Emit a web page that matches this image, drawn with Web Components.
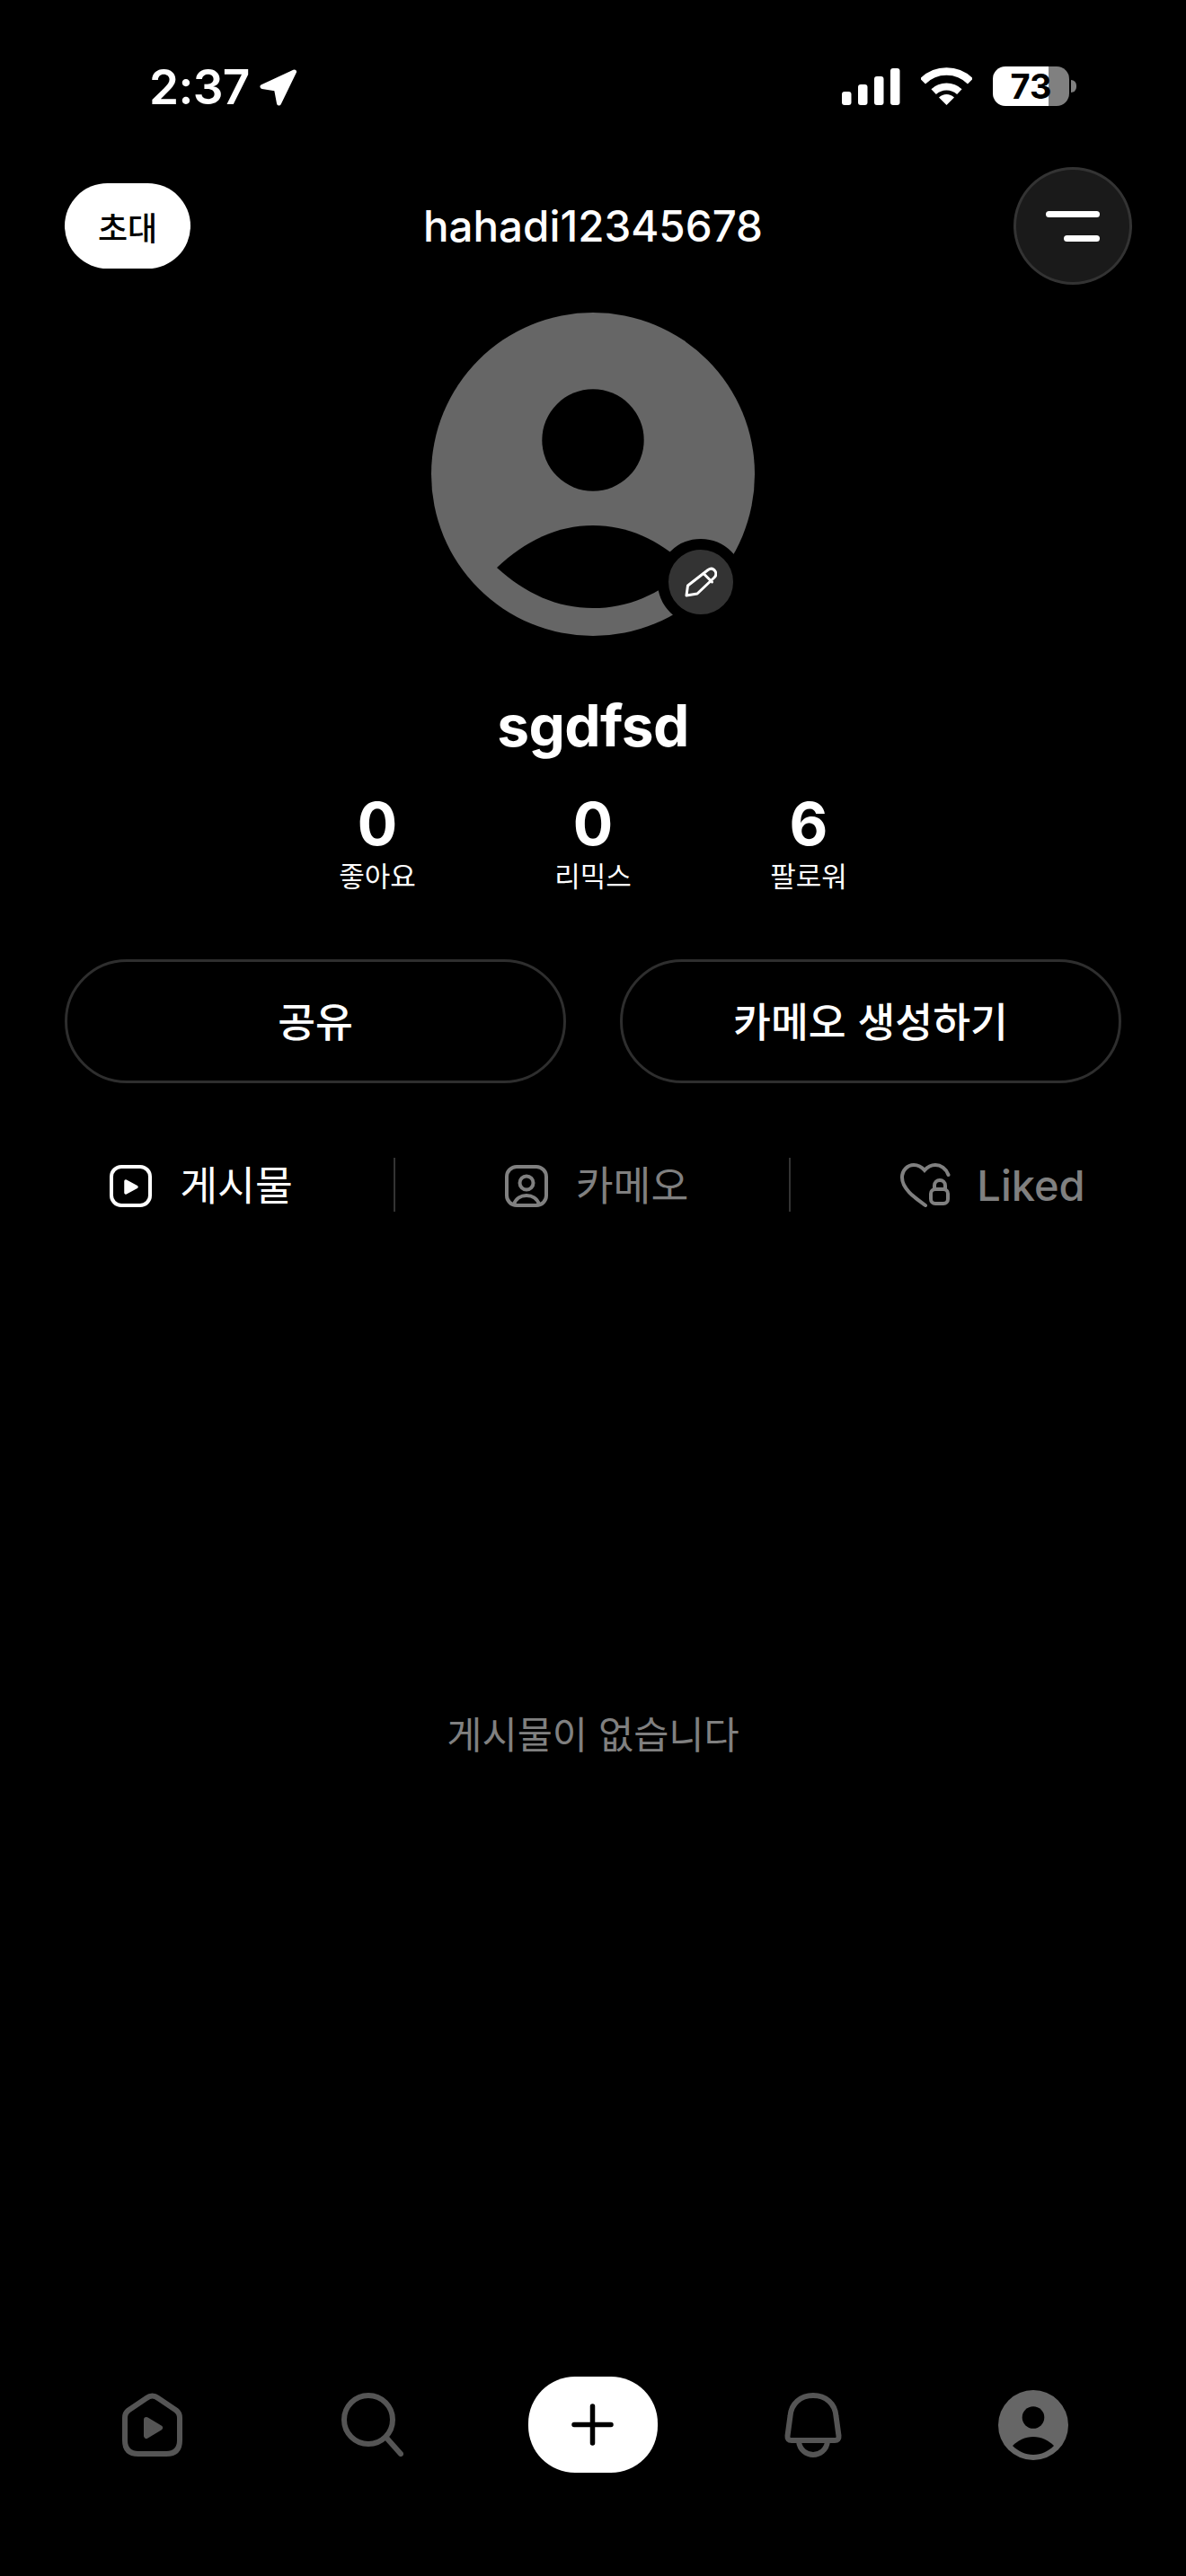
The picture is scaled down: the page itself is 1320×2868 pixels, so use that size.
<!DOCTYPE html>
<html lang="ko">
<head>
<meta charset="utf-8">
<title>sgdfsd</title>
<style>
  html, body { margin: 0; background: #000; }
  body {
    width: 1320px; height: 2868px; overflow: hidden;
    display: flex; flex-direction: column;
    color: #fff;
    font-family: Inter, "Noto Sans CJK KR", sans-serif;
  }
</style>
</head>
<body>
<status-bar time="2:37" level="73"></status-bar>
<profile-header handle="hahadi12345678" invite="초대"></profile-header>
<profile-avatar></profile-avatar>
<profile-name>sgdfsd</profile-name>
<stat-row>
  <stat-item value="0" label="좋아요"></stat-item>
  <stat-item value="0" label="리믹스"></stat-item>
  <stat-item value="6" label="팔로워"></stat-item>
</stat-row>
<action-row>
  <action-button>공유</action-button>
  <action-button>카메오 생성하기</action-button>
</action-row>
<profile-tabs>
  <tab-item active label="게시물" icon="posts"></tab-item>
  <tab-item label="카메오" icon="cameo"></tab-item>
  <tab-item label="Liked" icon="liked"></tab-item>
</profile-tabs>
<empty-note>게시물이 없습니다</empty-note>
<bottom-nav></bottom-nav>

<script>
  // Small helper: one shadow root per element, styles included.
  function shadow(el, html) {
    el.attachShadow({ mode: 'open' }).innerHTML = html;
  }

  customElements.define('status-bar', class extends HTMLElement {
    connectedCallback() {
      const t = this.getAttribute('time'), lv = this.getAttribute('level');
      shadow(this, `<style>
        :host { display: flex; align-items: flex-start; justify-content: space-between; height: 186px; padding: 0 122px 0 166px; box-sizing: border-box; flex: none; }
        .left { display: flex; align-items: flex-start; margin-top: 70px; }
        .time { font: 600 53px/54px Inter, sans-serif; letter-spacing: -0.6px; }
        .arrow { width: 42px; height: 41px; margin: 7px 0 0 11px; }
        .right { display: flex; align-items: flex-start; margin-top: 74px; }
        .bars { width: 65px; height: 41px; margin-top: 2px; }
        .wifi { width: 57px; height: 42px; margin: 1px 0 0 23px; }
        .batt { width: 85px; height: 44px; margin-left: 23px; border-radius: 14px; display: flex; align-items: center; justify-content: center;
                background: linear-gradient(90deg, #fff 73%, #808080 73%); color: #000; font: 700 38px/44px Inter, sans-serif; }
        .nub { width: 6px; height: 14px; margin: 15px 0 0 2px; background: #808080; border-radius: 0 7px 7px 0; }
      </style>
      <div class="left">
        <span class="time">${t}</span>
        <svg class="arrow" viewBox="0 0 42 41"><path d="M38.5 3 3 19.5 18.5 22 21.5 38Z" fill="#fff" stroke="#fff" stroke-width="5" stroke-linejoin="round"/></svg>
      </div>
      <div class="right">
        <svg class="bars" viewBox="0 0 65 41" fill="#fff">
          <rect x="0" y="26" width="10.5" height="15" rx="3"/>
          <rect x="18" y="18" width="10.5" height="23" rx="3"/>
          <rect x="36" y="9" width="10.5" height="32" rx="3"/>
          <rect x="54" y="0" width="10.5" height="41" rx="3"/>
        </svg>
        <svg class="wifi" viewBox="0 0 57 42">
          <path d="M2 15.5A37.5 37.5 0 0 1 55 15.5" fill="none" stroke="#fff" stroke-width="8.5"/>
          <path d="M14.15 27.15A21 21 0 0 1 42.85 27.15" fill="none" stroke="#fff" stroke-width="8"/>
          <path d="M28.5 42 20 33.5A12 12 0 0 1 37 33.5Z" fill="#fff"/>
        </svg>
        <div class="batt">${lv}</div>
        <div class="nub"></div>
      </div>`);
    }
  });

  customElements.define('profile-header', class extends HTMLElement {
    connectedCallback() {
      shadow(this, `<style>
        :host { display: grid; grid-template-columns: 1fr auto 1fr; align-items: center; height: 131px; padding: 0 60px; flex: none; }
        .invite { width: 140px; height: 95px; margin-left: 12px; border-radius: 47.5px; background: #fff; color: #000; display: flex; align-items: center; justify-content: center;
                  font: 500 36px/1 "Noto Sans CJK KR", sans-serif; }
        .handle { font: 500 47.5px/60px Inter, "Noto Sans CJK KR", sans-serif; }
        .menu { justify-self: end; width: 132px; height: 131px; box-sizing: border-box; border-radius: 50%; background: #1a1a1a; border: 3px solid #333; display: flex; flex-direction: column; align-items: flex-end; justify-content: center; gap: 20px; padding-right: 33px; }
        .menu i { display: block; height: 7px; border-radius: 4px; background: #fff; }
        .menu i:first-child { width: 60px; }
        .menu i:last-child { width: 40px; }
      </style>
      <div class="invite">${this.getAttribute('invite')}</div>
      <div class="handle">${this.getAttribute('handle')}</div>
      <div class="menu"><i></i><i></i></div>`);
    }
  });

  customElements.define('profile-avatar', class extends HTMLElement {
    connectedCallback() {
      shadow(this, `<style>
        :host { display: block; width: 360px; height: 360px; margin: 31px auto 0; position: relative; flex: none; }
        svg.face { display: block; width: 360px; height: 360px; }
        .badge { position: absolute; left: 252px; top: 252px; width: 72px; height: 72px; border-radius: 50%; background: #333; border: 12px solid #000; display: flex; align-items: center; justify-content: center; }
        .badge svg { width: 36px; height: 35px; }
      </style>
      <svg class="face" viewBox="0 0 360 360">
        <circle cx="180" cy="180" r="180" fill="#666"/>
        <circle cx="180" cy="142" r="56.7" fill="#000"/>
        <path d="M73 284C105 254 140 237 180 237C220 237 255 254 287 284C255 313 220 329 180 329C140 329 105 313 73 284Z" fill="#000"/>
      </svg>
      <div class="badge">
        <svg viewBox="0 0 36 35" fill="none" stroke="#fff" stroke-width="3" stroke-linejoin="round" stroke-linecap="round">
          <path d="M2 32 3.5 21 26 3.5C29 1.5 32 2 34 5C35.5 7.5 35 10 33 12L14 30Z"/>
          <path d="M21 7.5 30.5 17"/>
        </svg>
      </div>`);
    }
  });

  customElements.define('profile-name', class extends HTMLElement {
    connectedCallback() {
      shadow(this, `<style>
        :host { display: block; margin-top: 62px; text-align: center; font: 700 64px/76px Inter, sans-serif; letter-spacing: -0.6px; flex: none; }
      </style><slot></slot>`);
    }
  });

  customElements.define('stat-row', class extends HTMLElement {
    connectedCallback() {
      shadow(this, `<style>
        :host { display: grid; grid-template-columns: repeat(3, 240px); justify-content: center; margin-top: 41px; flex: none; }
      </style><slot></slot>`);
    }
  });

  customElements.define('stat-item', class extends HTMLElement {
    connectedCallback() {
      shadow(this, `<style>
        :host { display: flex; flex-direction: column; align-items: center; }
        .v { font: 700 66px/60px Inter, sans-serif; }
        .l { font: 400 31px/40px "Noto Sans CJK KR", sans-serif; margin-top: 7px; }
      </style>
      <span class="v">${this.getAttribute('value')}</span>
      <span class="l">${this.getAttribute('label')}</span>`);
    }
  });

  customElements.define('action-row', class extends HTMLElement {
    connectedCallback() {
      shadow(this, `<style>
        :host { display: grid; grid-template-columns: 558px 558px; column-gap: 60px; padding-left: 72px; margin-top: 74px; flex: none; }
      </style><slot></slot>`);
    }
  });

  customElements.define('action-button', class extends HTMLElement {
    connectedCallback() {
      shadow(this, `<style>
        :host { display: flex; align-items: center; justify-content: center; height: 138px; box-sizing: border-box; border: 3px solid #2e2e2e; border-radius: 69px; padding-bottom: 3px;
                font: 500 45.5px/1 "Noto Sans CJK KR", sans-serif; }
      </style><slot></slot>`);
    }
  });

  customElements.define('profile-tabs', class extends HTMLElement {
    connectedCallback() {
      shadow(this, `<style>
        :host { display: grid; grid-template-columns: repeat(3, 440px); margin-top: 83px; height: 60px; flex: none; }
      </style><slot></slot>`);
    }
  });

  const TAB_ICONS = {
    posts: `<svg width="47" height="47" viewBox="0 0 47 47" fill="none" stroke="currentColor" stroke-width="4">
      <rect x="2" y="2" width="43" height="43" rx="11"/>
      <path d="M18 18 30 24.5 18 31Z" fill="currentColor" stroke-width="3.5" stroke-linejoin="round"/></svg>`,
    cameo: `<svg width="48" height="47" viewBox="0 0 48 47" fill="none" stroke="currentColor" stroke-width="4">
      <rect x="2" y="2" width="44" height="43" rx="11"/>
      <circle cx="24" cy="20" r="7.5"/>
      <path d="M10 44C12 37 18 34 24 34C30 34 36 37 38 44"/></svg>`,
    liked: `<svg width="57" height="50" viewBox="0 0 57 50" fill="none" stroke="currentColor" stroke-width="4" stroke-linecap="round">
      <path d="M28 47C20 41 2 30 2 16C2 8 8 2 15 2C20 2 24 4.5 27 8C30 4.5 34 2 39 2C45 2 51 6 53.5 13"/>
      <rect x="34" y="29" width="19" height="16" rx="5"/>
      <path d="M38 29V25a6 6 0 0 1 12 0V29"/></svg>`
  };

  customElements.define('tab-item', class extends HTMLElement {
    connectedCallback() {
      const active = this.hasAttribute('active');
      const last = this.getAttribute('icon') === 'liked';
      shadow(this, `<style>
        :host { display: flex; align-items: center; justify-content: center; gap: ${last ? 28 : 31}px; box-sizing: border-box; height: 60px; padding-left: 10px;
                color: ${active ? '#fff' : '#808080'}; border-right: ${last ? 0 : 2}px solid #333; }
        svg { display: block; flex: none; margin-top: 2px; }
        span { font: ${last ? 500 : 400} ${last ? 47 : 45.5}px/60px Inter, "Noto Sans CJK KR", sans-serif; padding-top: ${last ? 2 : 4}px; line-height: 56px; }
      </style>${TAB_ICONS[this.getAttribute('icon')]}<span>${this.getAttribute('label')}</span>`);
    }
  });

  customElements.define('empty-note', class extends HTMLElement {
    connectedCallback() {
      shadow(this, `<style>
        :host { display: block; margin-top: 550px; text-align: center; color: #808080; font: 400 42.6px/60px "Noto Sans CJK KR", sans-serif; flex: none; }
      </style><slot></slot>`);
    }
  });

  customElements.define('bottom-nav', class extends HTMLElement {
    connectedCallback() {
      shadow(this, `<style>
        :host { display: grid; grid-template-columns: repeat(5, 1fr); align-items: center; justify-items: center; margin-top: auto; padding: 0 47px 115px; height: 107px; flex: none; }
        svg { display: block; }
        .add { width: 144px; height: 107px; border-radius: 52px; background: #fff; display: flex; align-items: center; justify-content: center; }
      </style>
      <svg width="67" height="71" viewBox="0 0 67 71" fill="none" stroke="#555" stroke-width="6" stroke-linejoin="round">
        <path d="M7 19.5 27 6Q33.5 1 40 6L60 19.5Q64 22.5 64 28V53Q64 68 49 68H18Q3 68 3 53V28Q3 22.5 7 19.5Z"/>
        <path d="M27 30 42 39 27 48Z" fill="#555" stroke-width="6"/>
      </svg>
      <svg width="70" height="71" viewBox="0 0 70 71" fill="none" stroke="#555" stroke-width="6" stroke-linecap="round" style="margin-right:2px">
        <circle cx="31" cy="30" r="27"/>
        <path d="M51 50 67 68"/>
      </svg>
      <div class="add">
        <svg width="47" height="47" viewBox="0 0 47 47" stroke="#000" stroke-width="5.5" stroke-linecap="round">
          <path d="M23.5 3V44M3 23.5H44"/>
        </svg>
      </div>
      <svg width="64" height="72" viewBox="0 0 64 72" fill="none" stroke="#555" stroke-width="6" stroke-linejoin="round">
        <path d="M3.5 48 6.5 26C7.5 12 18 3 32 3C46 3 56.5 12 57.5 26L60.5 48Q61 53 56 53H8Q3 53 3.5 48Z"/>
        <path d="M16 54C17 64 25 69 32 69C39 69 47 64 48 54"/>
      </svg>
      <svg width="78" height="78" viewBox="0 0 78 78">
        <circle cx="39" cy="39" r="39" fill="#666"/>
        <circle cx="39" cy="30.5" r="12.3" fill="#000"/>
        <path d="M16 62C22 56 30 52 39 52C48 52 56 56 62 62C56 68 48 72 39 72C30 72 22 68 16 62Z" fill="#000"/>
      </svg>`);
    }
  });
</script>
</body>
</html>
